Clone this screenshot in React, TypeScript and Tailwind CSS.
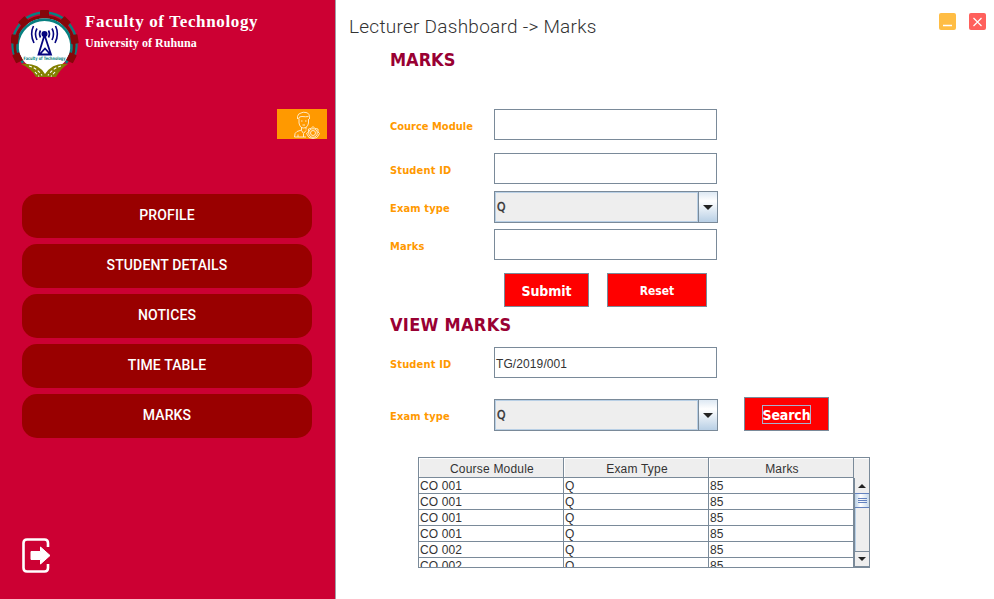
import React from "react";

const navItems = ["PROFILE", "STUDENT DETAILS", "NOTICES", "TIME TABLE", "MARKS"];
const rows = ["CO 001", "CO 001", "CO 001", "CO 001", "CO 002", "CO 002"];

const tahoma = "font-['DejaVu_Sans_Condensed','DejaVu_Sans',sans-serif] [font-stretch:condensed] font-bold";
const arial = "font-['Liberation_Sans',Arial,sans-serif]";

function Logo() {
  const teeth = [-117, -81, -43, 0, 43, 81, 117];
  return (
    <svg width="68" height="68" viewBox="0 0 68 68" className="shrink-0">
      <circle cx="33.5" cy="34" r="27" fill="#fff" />
      <path d="M4.500 48A32 32 0 1 1 62.500 48" fill="none" stroke="#078080" strokeWidth="2.4" />
      <path d="M8 51A29.500 29.500 0 1 1 59 51" fill="none" stroke="#85070a" strokeWidth="3" />
      <path d="M12 53A27 27 0 1 1 55 53" fill="none" stroke="#078080" strokeWidth="2.6" />
      {teeth.map((a) => (
        <rect key={a} x="29" y="0" width="9" height="7.5" rx="0.8" fill="#85070a" transform={`rotate(${a} 33.5 34)`} />
      ))}
      <circle cx="33.5" cy="24" r="3" fill="#05057f" />
      <path d="M33.5 25L27.500 44.500H40L33.500 25M29 44L34 38.500L39 44" fill="none" stroke="#05057f" strokeWidth="1.800" />
      <path d="M29.500 20.500Q27.500 24 29.500 27.500M37.500 20.500Q39.500 24 37.500 27.500M26 18.500Q23 24 26 30M41 18.500Q44 24 41 30M22.500 16Q18.500 24 23 33M44.500 16Q48.500 24 44 33" fill="none" stroke="#05057f" strokeWidth="1.6" />
      <text x="33.500" y="50" textAnchor="middle" textLength="42" lengthAdjust="spacingAndGlyphs" fontFamily="DejaVu Sans" fontWeight="bold" fontSize="4.5" fill="#078080">Faculty of Technology</text>
      <path d="M16 54H52L42 66H26Z" fill="#fff" />
      <path d="M10 54Q27 52 34 64Q42 52 57 54Q50 58 45 67H25Q20 58 10 54" fill="#828000" />
      <path d="M18 56Q26 58 31 65.500M24 62L28 66.500M50 56Q42 58 37 65.500M44 62L40 66.500" fill="none" stroke="#fff" strokeWidth="1.100" strokeDasharray="3 2" />
    </svg>
  );
}

function UserGear() {
  return (
    <svg width="27" height="28" viewBox="0 0 27 28" fill="none" stroke="#fff2d8" strokeWidth="0.9">
      <path d="M4.500 8V5.500Q5 2.500 8 2Q10 0.800 13 1.500Q17 2 16.500 8M5.500 8Q6 5 9 5.500Q13 6 15.500 5.500M6 8V12Q7 17 10.500 17Q14.500 17 15.500 12V8M8.500 16V19.500M13 16V18.500M8.500 19L4 20.500Q1.500 21.500 1.500 26H13M8.500 19.500L10.500 22.500L13 19.500M5 23.500V26M10.500 23V26" />
      <path d="M8 10H9.500M12 10H13.500M9.500 14H12" />
      <path d="M20 15.500L22 17.500L25 18V21L26.500 22.500L24 26.500L20 27.500L16 26.500L13.500 22.500L15.500 21V18L18 17.500Z" />
      <circle cx="20" cy="22" r="2.500" />
      <circle cx="20" cy="22" r="4.300" />
    </svg>
  );
}

function Field({ value = "" }: { value?: string }) {
  return (
    <div className={`h-[31px] w-[223px] shrink-0 border border-[#7a8a99] pl-[1px] pt-[1px] text-[12px] leading-[31px] text-[#333] ${arial}`}>
      <span className="tracking-[0.1px]">{value}</span>
    </div>
  );
}

function Combo() {
  return (
    <div className="flex h-[32px] w-[224px] shrink-0 border border-[#7a8a99]">
      <div className="flex-1 border border-[#b8cfe5] bg-[#eee] pl-[1px] font-['DejaVu_Sans_Condensed','DejaVu_Sans',sans-serif] text-[12px] leading-[28px] text-[#333] [-webkit-text-stroke:0.4px_#333]">Q</div>
      <div className="flex w-[19px] items-center justify-center border-l border-[#7a8a99] bg-[linear-gradient(#dde8f3,#fff_30%,#b8cfe5)]">
        <svg width="10" height="5" viewBox="0 0 10 5"><path d="M0 0H10L5 5Z" fill="#222" /></svg>
      </div>
    </div>
  );
}

function Label({ children, track = "tracking-[0.15px]" }: { children: React.ReactNode; track?: string }) {
  return (
    <div className={`w-[104px] shrink-0 whitespace-nowrap pt-[4px] text-[11px] leading-[14px] text-[#ff9900] ${tahoma}`}>
      <span className={track}>{children}</span>
    </div>
  );
}

function Cell({ children }: { children: React.ReactNode }) {
  return <div className="h-[16px] w-[145px] shrink-0 border-b border-r border-[#7a8a99] pl-[1px] text-[12px] leading-[16px] tracking-[0.1px]">{children}</div>;
}

function Head({ children }: { children: React.ReactNode }) {
  return (
    <div className="h-[20px] w-[145px] shrink-0 border-b border-r border-[#7a8a99] bg-[#eee] pl-[2px] pt-[1px] text-center text-[12px] leading-[20px] tracking-[0.2px] shadow-[inset_1px_1px_0_#fff]">
      {children}
    </div>
  );
}

export default function App() {
  return (
    <div className="flex h-[599px] w-[994px] overflow-hidden bg-white">
      <aside className="flex w-[336px] shrink-0 flex-col border-r border-[#a0a0a8] bg-[#cc0033]">
        <div className="flex h-[109px] pl-[11px] pt-[10px]">
          <Logo />
          <div className="whitespace-nowrap pl-[6px] font-['Liberation_Serif','Times_New_Roman',serif] font-bold text-white">
            <div className="text-[17px] leading-[23px] tracking-[0.65px]">Faculty of Technology</div>
            <div className="text-[12px] leading-[20px] tracking-[0.05px]">University of Ruhuna</div>
          </div>
        </div>
        <div className="ml-[277px] h-[30px] w-[50px] bg-[#ff9900] pl-[16px] pt-[2px]"><UserGear /></div>
        <nav className="ml-[22px] mt-[55px] flex flex-col gap-[6px]">
          {navItems.map((n) => (
            <button key={n} className="h-[44px] w-[290px] rounded-[15px] bg-[#990000] pb-[1px] text-center font-['Roboto',sans-serif] text-[14px] font-medium tracking-[0.12px] text-white">
              {n}
            </button>
          ))}
        </nav>
        <svg className="ml-[21px] mt-[99px]" width="31" height="37" viewBox="0 0 31 37">
          <path d="M27 10V6Q27 2.500 23.500 2.500H6Q2.500 2.500 2.500 6V31Q2.500 34.500 6 34.500H23.500Q27 34.500 27 31V27" fill="none" stroke="#fff" strokeWidth="2.600" />
          <path d="M10 14.500H19.500V10L29 18.500L19.500 27V22.500H10Z" fill="#fff" stroke="#fff" strokeLinejoin="round" />
        </svg>
      </aside>

      <main className="flex w-[658px] flex-col text-[#333]">
        <header className="flex h-[46px] justify-between pl-[13px] pr-[8px]">
          <h1 className="whitespace-nowrap pt-[14px] font-['Roboto',sans-serif] text-[19px] font-light leading-[26px] tracking-[0.26px]">Lecturer Dashboard -&gt; Marks</h1>
          <div className="flex gap-[13px] pt-[13px]">
            <svg width="17" height="17" viewBox="0 0 17 17"><rect width="17" height="17" rx="2" fill="#ffbd44" /><path d="M4 12.500H13" stroke="#fff" strokeWidth="1.500" /></svg>
            <svg width="17" height="17" viewBox="0 0 17 17"><rect width="17" height="17" rx="2" fill="#ff605c" /><path d="M4.500 5L12.500 13M12.500 5L4.500 13" stroke="#fff" strokeWidth="1.200" /></svg>
          </div>
        </header>
        <section className="flex flex-col pl-[54px]">
          <h2 className={`h-[63px] text-[18px] leading-[28px] text-[#990033] ${tahoma}`}>MARKS</h2>
          <div className="flex h-[31px] items-center"><Label track="tracking-[0px]">Cource Module</Label><Field /></div>
          <div className="mt-[13px] flex h-[31px] items-center"><Label>Student ID</Label><Field /></div>
          <div className="mt-[7px] flex h-[32px] items-center"><Label>Exam type</Label><Combo /></div>
          <div className="mt-[6px] flex h-[31px] items-center"><Label>Marks</Label><Field /></div>
          <div className={`ml-[114px] mt-[13px] flex gap-[18px] text-white ${tahoma}`}>
            <button className="h-[34px] w-[85px] border border-[#7a8a99] bg-[#ff0000] pt-[2px] text-[14px] tracking-[-0.1px]">Submit</button>
            <button className="h-[34px] w-[100px] border border-[#7a8a99] bg-[#ff0000] pt-[1px] text-[12px]">Reset</button>
          </div>
          <h2 className={`mt-[4px] h-[36px] text-[18px] leading-[28px] tracking-[0.3px] text-[#990033] ${tahoma}`}>VIEW MARKS</h2>
          <div className="flex h-[31px] items-center"><Label>Student ID</Label><Field value="TG/2019/001" /></div>
          <div className="mt-[19px] flex h-[34px] items-center">
            <div className="mt-[2px] flex h-[32px] items-center"><Label>Exam type</Label><Combo /></div>
            <button className={`ml-[26px] flex h-[34px] w-[85px] items-center justify-center border border-[#7a8a99] bg-[#ff0000] text-[14px] tracking-[-0.1px] text-white ${tahoma}`}>
              <span className="flex h-[19px] w-[49px] items-center justify-center border border-[#a8b0cc] pt-[2px]">Search</span>
            </button>
          </div>
        </section>

        <div className={`ml-[82px] mt-[26px] flex h-[111px] w-[452px] flex-col overflow-hidden border border-[#7a8a99] ${arial}`}>
          <div className="flex shrink-0">
            <Head>Course Module</Head>
            <Head>Exam Type</Head>
            <Head>Marks</Head>
            <div className="h-[20px] flex-1 bg-[#eee] shadow-[inset_0_1px_0_#fff]" />
          </div>
          <div className="flex h-[89px] overflow-hidden">
            <div className="w-[435px] shrink-0">
              {rows.map((r, i) => (
                <div key={i} className="flex">
                  <Cell>{r}</Cell>
                  <Cell>Q</Cell>
                  <Cell>85</Cell>
                </div>
              ))}
            </div>
            <div className="flex h-[89px] w-[15px] flex-col border-l border-[#7a8a99] bg-[#eee]">
              <div className="flex h-[15px] items-center justify-center"><svg width="8" height="4" viewBox="0 0 8 4"><path d="M0 4L4 0L8 4Z" fill="#222" /></svg></div>
              <div className="flex h-[15px] flex-col items-center justify-center gap-[1px] border-y border-[#6382bf] bg-[linear-gradient(90deg,#b8cfe5,#fff_40%,#c8daec)]">
                <div className="h-px w-[9px] bg-[#6382bf]" />
                <div className="h-px w-[9px] bg-[#6382bf]" />
                <div className="h-px w-[9px] bg-[#6382bf]" />
              </div>
              <div className="h-[43px] border-l border-[#b8cfe5]" />
              <div className="flex flex-1 items-center justify-center border-y border-[#7a8a99]"><svg width="8" height="4" viewBox="0 0 8 4"><path d="M0 0H8L4 4Z" fill="#222" /></svg></div>
            </div>
          </div>
        </div>
      </main>
    </div>
  );
}
